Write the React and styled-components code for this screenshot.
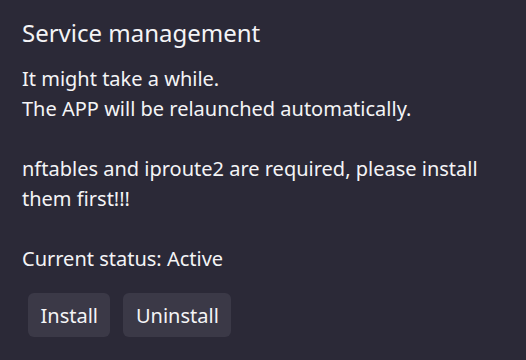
import styled, { createGlobalStyle } from 'styled-components'

const GlobalStyle = createGlobalStyle`
  html, body {
    margin: 0;
    padding: 0;
    background: #2b2937;
  }
  body {
    font-family: "Noto Sans", "Open Sans", sans-serif;
    color: #f4f4f6;
  }
`

const Panel = styled.div`
  width: 526px;
  height: 360px;
  box-sizing: border-box;
  padding: 16px 22px;
  background: #2b2937;
`

const Title = styled.h2`
  margin: 0;
  font-size: 24px;
  font-weight: 400;
  line-height: 34px;
`

const Message = styled.p`
  margin: 14px 0 0;
  font-size: 20px;
  line-height: 30px;
`

const Actions = styled.div`
  display: flex;
  gap: 13px;
  margin: 19px 0 0 6px;
`

const Button = styled.button`
  font-family: "Noto Sans", "Open Sans", sans-serif;
  font-size: 20px;
  color: #f4f4f6;
  background: #3b3947;
  border: none;
  border-radius: 6px;
  height: 44px;
  padding: 0 12.5px;
  cursor: pointer;

  &:hover {
    background: #46445a;
  }
`

export default function App () {
  return (
    <Panel>
      <GlobalStyle />
      <Title>Service management</Title>
      <Message>
        It might take a while.<br />
        The APP will be relaunched automatically.<br />
        <br />
        nftables and iproute2 are required, please install them first!!!<br />
        <br />
        Current status: Active
      </Message>
      <Actions>
        <Button>Install</Button>
        <Button>Uninstall</Button>
      </Actions>
    </Panel>
  )
}
